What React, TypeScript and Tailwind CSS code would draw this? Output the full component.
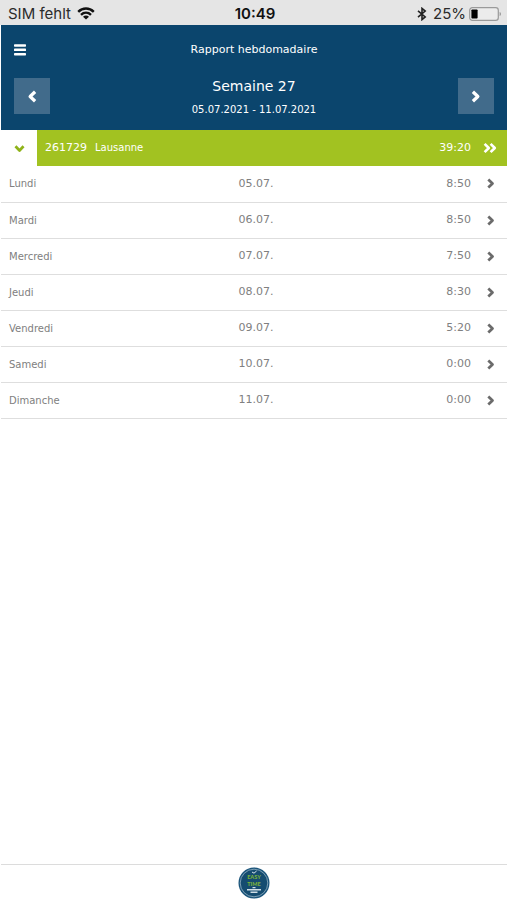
import React from 'react';

const days = [
  { name: 'Lundi', date: '05.07.', hours: '8:50' },
  { name: 'Mardi', date: '06.07.', hours: '8:50' },
  { name: 'Mercredi', date: '07.07.', hours: '7:50' },
  { name: 'Jeudi', date: '08.07.', hours: '8:30' },
  { name: 'Vendredi', date: '09.07.', hours: '5:20' },
  { name: 'Samedi', date: '10.07.', hours: '0:00' },
  { name: 'Dimanche', date: '11.07.', hours: '0:00' },
];

const Chevron = ({ className = '' }: { className?: string }) => (
  <svg viewBox="0 0 12 12" className={className} fill="none" stroke="currentColor" strokeWidth="3" strokeLinejoin="round" aria-hidden="true">
    <path d="M3.6 1.6 L8.2 6 L3.6 10.4" />
  </svg>
);

const StatusBar = () => (
  <div className="grid grid-cols-3 items-center h-[25px] pt-[2px] pl-2 pr-[5px] bg-[#e5e5e5] text-[#111] text-[15px] leading-5 font-['Inter',sans-serif]">
    <div className="flex items-center gap-1.5 whitespace-nowrap text-[#2b2b2b]">
      SIM fehlt
      <svg viewBox="0 0 18 13" className="w-[18px] h-[13px]" fill="none" stroke="#111" strokeWidth="2.4" aria-hidden="true">
        <path d="M1.2 4.8 C5.6 0.4 12.4 0.4 16.8 4.8" />
        <path d="M4 7.8 C6.9 5 11.1 5 14 7.8" />
        <path d="M9 12.6 L6 9.7 C7.7 8.2 10.3 8.2 12 9.7 Z" fill="#111" stroke="none" />
      </svg>
    </div>
    <div className="text-center font-semibold">10:49</div>
    <div className="flex items-center justify-end whitespace-nowrap text-[#2b2b2b]">
      <svg viewBox="0 0 10 14" className="w-[10px] h-[14px] mr-1.5" fill="none" stroke="#222" strokeWidth="1.6" aria-hidden="true">
        <path d="M1 3.8 L8.2 9.9 L5 12.6 V1.4 L8.2 4.1 L1 10.2" />
      </svg>
      25%
      <svg viewBox="0 0 33 14" className="w-[33px] h-[14px] ml-[3px]" aria-hidden="true">
        <rect x="0.7" y="0.7" width="28.6" height="12.6" rx="2.6" fill="#ececec" stroke="#9a9a9a" strokeWidth="1.2" />
        <rect x="2.4" y="2.4" width="6.2" height="9.2" rx="0.8" fill="#000" />
        <path d="M30.6 5 C32.4 5.4 32.4 8.6 30.6 9 Z" fill="#9a9a9a" />
      </svg>
    </div>
  </div>
);

const Header = () => (
  <header className="bg-[#0b456d] text-white px-[13px] pt-[13px] pb-3">
    <div className="grid grid-cols-[24px_1fr_24px] items-center">
      <button type="button" aria-label="Menu" className="flex h-6 items-center">
        <svg viewBox="0 0 12 12" className="w-3 h-3" fill="currentColor" aria-hidden="true">
          <rect x="0" y="0.2" width="12" height="2.5" rx="0.7" />
          <rect x="0" y="4.6" width="12" height="2.5" rx="0.7" />
          <rect x="0" y="9" width="12" height="2.5" rx="0.7" />
        </svg>
      </button>
      <h1 className="text-center text-[11px] leading-4">Rapport hebdomadaire</h1>
    </div>
    <div className="flex items-center justify-between mt-3">
      <button type="button" aria-label="Semaine précédente" className="flex size-9 items-center justify-center bg-[#416b8b]">
        <Chevron className="size-[13px] rotate-180" />
      </button>
      <div className="pt-0.5 text-center">
        <h2 className="text-sm leading-5">Semaine 27</h2>
        <p className="mt-1.5 text-[10px] leading-4">05.07.2021 - 11.07.2021</p>
      </div>
      <button type="button" aria-label="Semaine suivante" className="flex size-9 items-center justify-center bg-[#416b8b]">
        <Chevron className="size-[13px]" />
      </button>
    </div>
  </header>
);

const ProjectBar = () => (
  <div className="flex h-9 items-center bg-[#a2c221] text-white text-[11px]">
    <button type="button" aria-label="Replier" className="flex h-9 w-9 items-center justify-center bg-white text-[#8fb31a]">
      <Chevron className="size-[11px] rotate-90" />
    </button>
    <div className="flex grow items-baseline gap-2 pl-2 pt-px">
      <span>261729</span>
      <span className="text-[10px]">Lausanne</span>
      <span className="ml-auto">39:20</span>
    </div>
    <button type="button" aria-label="Ouvrir le rapport" className="flex h-9 w-9 items-center justify-center pl-0.5">
      <svg viewBox="0 0 14 12" className="w-[14px] h-3" fill="none" stroke="currentColor" strokeWidth="2.6" strokeLinejoin="round" aria-hidden="true">
        <path d="M1.6 1.8 L5.8 6 L1.6 10.2" />
        <path d="M7.6 1.8 L11.8 6 L7.6 10.2" />
      </svg>
    </button>
  </div>
);

const DayTable = () => (
  <table className="w-full table-fixed border-collapse text-[11px] text-[#808080]">
    <tbody>
      {days.map((day) => (
        <tr key={day.date} className="h-9 border-b border-[#dedede]">
          <td className="pl-2 text-[10px]">{day.name}</td>
          <td className="pl-1 text-center">{day.date}</td>
          <td>
            <div className="flex items-center justify-end">
              {day.hours}
              <button type="button" aria-label={`Ouvrir ${day.name}`} className="flex w-9 items-center justify-center pl-0.5 text-[#6b6b6b]">
                <Chevron className="size-[11px]" />
              </button>
            </div>
          </td>
        </tr>
      ))}
    </tbody>
  </table>
);

const Footer = () => (
  <footer className="flex h-9 items-center justify-center border-t border-[#dcdcdc]">
    <svg viewBox="0 0 32 32" className="size-8" role="img" aria-label="Easy Time">
      <circle cx="16" cy="16" r="15.5" fill="#1b557b" />
      <circle cx="16" cy="16" r="13.8" fill="#154c70" stroke="#a9c2d0" strokeWidth="0.7" />
      <path d="M14 5 L16 6.2 L18.6 4" fill="none" stroke="#dbe6ec" strokeWidth="1" />
      <text x="16" y="12.4" textAnchor="middle" fontSize="5.5" fontWeight="900" fill="#78b03a" fontFamily="Lato, sans-serif">EASY</text>
      <text x="16" y="19" textAnchor="middle" fontSize="5.5" fontWeight="900" fill="#78b03a" fontFamily="Lato, sans-serif">TIME</text>
      <path d="M14.5 20.6 H17.5 M9 22.8 H23 M12.5 25.2 H19.5" stroke="#cfdde5" strokeWidth="1.4" />
    </svg>
  </footer>
);

const App = () => (
  <div className="flex min-h-screen flex-col bg-white font-['DejaVu_Sans',sans-serif]">
    <StatusBar />
    <div className="flex grow flex-col pl-px">
      <Header />
      <main className="grow">
        <ProjectBar />
        <DayTable />
      </main>
      <Footer />
    </div>
  </div>
);

export default App;
